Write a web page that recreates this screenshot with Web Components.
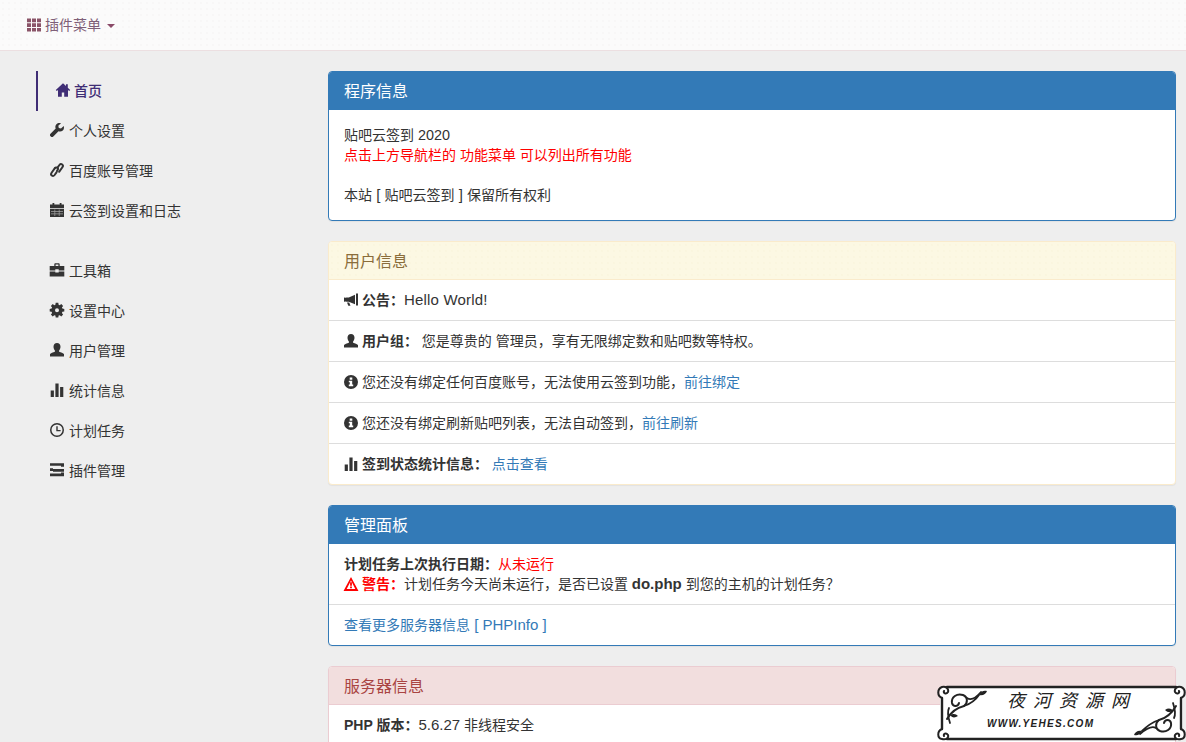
<!DOCTYPE html>
<html lang="zh-CN">
<head>
<meta charset="utf-8">
<title>贴吧云签到</title>
<style>
    html, body { margin: 0; height: 100%; overflow: hidden; }
    body {
        background: #eee;
        color: #333;
        font: 14px/20px "Liberation Sans", "Noto Sans CJK SC", sans-serif;
    }
    .page { display: flex; padding: 20px 10px 0 36px; }
    .red { color: #f00; }
    .en { font-size: 15px; }
    a { color: #337ab7; text-decoration: none; }
</style>
</head>
<body>
<top-bar icon="th" label="插件菜单"></top-bar>

<div class="page">
    <side-nav>
        <side-item icon="home" active>首页</side-item>
        <side-item icon="wrench">个人设置</side-item>
        <side-item icon="link">百度账号管理</side-item>
        <side-item icon="calendar">云签到设置和日志</side-item>
        <side-item icon="briefcase" group>工具箱</side-item>
        <side-item icon="cog">设置中心</side-item>
        <side-item icon="user">用户管理</side-item>
        <side-item icon="stats">统计信息</side-item>
        <side-item icon="time">计划任务</side-item>
        <side-item icon="tasks">插件管理</side-item>
    </side-nav>

    <main-column>
        <info-panel kind="primary" heading="程序信息">
            <panel-row pad="15">
                贴吧云签到<span class="en" style="font-size:14.4px"> 2020</span><br>
                <span class="red">点击上方导航栏的 功能菜单 可以列出所有功能</span><br><br>
                本站<span class="en"> [ </span>贴吧云签到<span class="en"> ] </span>保留所有权利
            </panel-row>
        </info-panel>

        <info-panel kind="warning" heading="用户信息">
            <panel-row><glyph-icon name="bullhorn"></glyph-icon> <b>公告&#xFF1A;</b><span class="en" style="letter-spacing:.2px">Hello World!</span></panel-row>
            <panel-row line><glyph-icon name="user"></glyph-icon> <b>用户组&#xFF1A;</b> 您是尊贵的 管理员&#xFF0C;享有无限绑定数和贴吧数等特权。</panel-row>
            <panel-row line><glyph-icon name="info"></glyph-icon> 您还没有绑定任何百度账号&#xFF0C;无法使用云签到功能&#xFF0C;<a href="#">前往绑定</a></panel-row>
            <panel-row line><glyph-icon name="info"></glyph-icon> 您还没有绑定刷新贴吧列表&#xFF0C;无法自动签到&#xFF0C;<a href="#">前往刷新</a></panel-row>
            <panel-row line><glyph-icon name="stats"></glyph-icon> <b>签到状态统计信息&#xFF1A;</b> <a href="#">点击查看</a></panel-row>
        </info-panel>

        <info-panel kind="primary" heading="管理面板">
            <panel-row>
                <b>计划任务上次执行日期&#xFF1A;</b><span class="red">从未运行</span><br>
                <glyph-icon name="warning" class="red"></glyph-icon> <b class="red">警告&#xFF1A;</b>计划任务今天尚未运行&#xFF0C;是否已设置 <b class="en">do.php</b> 到您的主机的计划任务&#xFF1F;
            </panel-row>
            <panel-row line><a href="#">查看更多服务器信息<span class="en"> [ PHPInfo ]</span></a></panel-row>
        </info-panel>

        <info-panel kind="danger" heading="服务器信息">
            <panel-row><b>PHP 版本&#xFF1A;</b><span class="en">5.6.27</span> 非线程安全</panel-row>
        </info-panel>
    </main-column>
</div>

<water-mark></water-mark>

<script type="text/javascript">
    const GLYPHS = {
        th: '<path d="M0 .5h4v3.7H0zM5 .5h4v3.7H5zM10 .5h4v3.7h-4zM0 5.200h4v3.700H0zM5 5.200h4v3.700H5zM10 5.200h4v3.700h-4zM0 9.900h4v3.700H0zM5 9.900h4v3.700H5zM10 9.900h4v3.700h-4z"/>',
        home: '<path d="M7 .2-.2 7l1 1.100L2 7V13.800h3.800V9.500h2.400v4.300H12V7l1.200 1.100 1-1.100-2.400-2.300V1.200H10v1.900z"/>',
        wrench: '<path d="M13.700 2.900 11 5.500 8.800 5l-.5-2.200L11 .2C9.200-.4 7.500 0 6.400 1.200 5.300 2.400 5.100 4 5.700 5.500L.5 10.700c-.7.700-.7 1.800 0 2.500l.3.300c.7.700 1.800.7 2.500 0l5.200-5.200c1.500.6 3.100.3 4.300-.8 1.100-1.100 1.500-2.900.9-4.600z"/>',
        link: '<g fill="none" stroke="currentColor" stroke-width="2" stroke-linecap="round"><path d="M6.500 9.400 4.600 12c-.8 1-2 1.100-2.800.5S.9 10.700 1.600 9.700L4.900 5.200"/><path d="M7.500 4.600 9.400 2c.8-1 2-1.100 2.800-.5s.9 1.800.2 2.800L9.100 8.800"/><path d="M4.900 5.200c.7-.9 1.800-1 2.500-.4s.7 1.700 0 2.600l-.5.700"/></g>',
        calendar: '<path d="M0 1.500h2.500V0h1.800v1.500h5.400V0h1.800v1.500H14v3.700H0zM0 6h14v8H0z"/><path fill="#fff" opacity=".55" d="M1 8h12v.7H1zM1 10.500h12v.7H1zM4.500 6.500h.7v6.500h-.7zM8.800 6.500h.7v6.500h-.7z"/>',
        briefcase: '<path d="M4.300 3V1.300C4.300.7 4.800.2 5.400.2h3.200c.6 0 1.100.5 1.100 1.100V3H14.300v4.500H8.700V6.300H5.300v1.200H-.3V3zm1.300 0h2.800V1.500H5.600zM-.3 8.500h5.600v1.100h3.400V8.500h5.600V13.500H-.3z"/>',
        cog: '<path d="M5.700-.2h2.600l.3 2 1.100.4 1.600-1.200L13.100 2.900l-1.200 1.600.5 1.100 1.900.3v2.600l-1.900.3-.5 1.100 1.200 1.600-1.800 1.900-1.600-1.200-1.100.4-.3 2H5.700l-.3-2-1.100-.4-1.600 1.200L.9 11.500l1.200-1.600-.5-1.100-1.900-.3V5.900l1.900-.3.5-1.100L.9 2.900 2.700 1l1.600 1.200 1.100-.4zM7 5.200a2 2 0 1 0 0 4 2 2 0 0 0 0-4z"/>',
        user: '<path d="M7 0c2.200 0 3.500 1.600 3.500 3.700 0 1.500-.6 2.900-1.400 3.700v1.300c1.900.6 4.200 1.300 4.900 2.400v2.400H0v-2.400c.7-1.100 3-1.800 4.900-2.400V7.400C4.100 6.600 3.500 5.200 3.500 3.700 3.500 1.600 4.800 0 7 0z"/>',
        stats: '<path d="M.7 7.500h3.200V14H.7zM5.400.5h3.200V14H5.400zM10.100 4h3.200v10h-3.200z"/>',
        time: '<path fill-rule="evenodd" d="M7 0a7 7 0 1 1 0 14A7 7 0 0 1 7 0zm0 1.500a5.500 5.500 0 1 0 0 11 5.500 5.500 0 0 0 0-11z"/><path d="M6.300 3.200h1.400v3.700h2.900v1.400H6.300z"/>',
        tasks: '<path d="M0 .3h14v3.400H11V2.800H0zM0 5.200h3v.9h11v2.600H3v-.8H0zM0 10.500h11v-.9h3v3.600H0z"/>',
        bullhorn: '<path d="M12 .5h2v12h-2zM11 1.800v9.400L4.800 8.800H2.500L1.800 8.500 0 8.800V4.400l1.800.3.700-.3h2.300zM3 9.400h2.200L6.500 12.800H4.300z"/>',
        info: '<path fill-rule="evenodd" d="M7 0a7 7 0 1 1 0 14A7 7 0 0 1 7 0zM5.700 2.500v2.200h2.600V2.500zM4.800 5.800v1.500h1v2.300h-1V11.200h4.400V9.600h-1V5.800z"/>',
        warning: '<path fill-rule="evenodd" d="M7 0 14.500 14H-.5zm0 3.600L2.700 11.900h8.600z"/><path d="M6.100 5.200h1.800v3.600H6.100zm0 4.300h1.800v1.700H6.100z"/>'
    };

    class GlyphIcon extends HTMLElement {
        constructor() {
            super();
            this.attachShadow({mode: 'open'});
            this.shadowRoot.innerHTML = `
                <style>
                    :host { display: inline-block; width: 14px; height: 14px; vertical-align: -2px; }
                    svg { display: block; width: 14px; height: 14px; fill: currentColor; overflow: visible; }
                </style>
                <svg viewBox="0 0 14 14">${GLYPHS[this.getAttribute('name')] || ''}</svg>`;
        }
    }

    class TopBar extends HTMLElement {
        constructor() {
            super();
            this.attachShadow({mode: 'open'});
            this.shadowRoot.innerHTML = `
                <style>
                    :host {
                        display: flex;
                        align-items: center;
                        box-sizing: border-box;
                        height: 51px;
                        padding-left: 27px;
                        color: #7f5f78;
                        border-bottom: 1px solid #ecdfe1;
                        background-color: #fbfbfb;
                        background-image: radial-gradient(#f3f1f1 0.6px, transparent 0.8px);
                        background-size: 6px 6px;
                    }
                    glyph-icon { width: 13px; margin-right: 5px; color: #8a5468; }
                    .caret {
                        width: 0; height: 0; margin-left: 6px; margin-top: 2px;
                        border-top: 4px solid #8a4a68;
                        border-left: 4px solid transparent;
                        border-right: 4px solid transparent;
                    }
                </style>
                <glyph-icon name="${this.getAttribute('icon')}"></glyph-icon>
                <span>${this.getAttribute('label')}</span>
                <span class="caret"></span>`;
        }
    }

    class SideNav extends HTMLElement {
        constructor() {
            super();
            this.attachShadow({mode: 'open'});
            this.shadowRoot.innerHTML = `
                <style>
                    :host { display: flex; flex-direction: column; flex: 0 0 292px; }
                </style>
                <slot></slot>`;
        }
    }

    class SideItem extends HTMLElement {
        constructor() {
            super();
            this.attachShadow({mode: 'open'});
            this.shadowRoot.innerHTML = `
                <style>
                    :host {
                        display: flex;
                        align-items: center;
                        height: 40px;
                        padding-left: 14px;
                        box-sizing: border-box;
                        color: #333;
                    }
                    :host([group]) { margin-top: 20px; }
                    :host([active]) {
                        padding-left: 18px;
                        color: #3f2d75;
                        border-left: 2px solid #3f2d75;
                        font-weight: 500;
                    }
                    glyph-icon { margin-right: 5px; transform: translateY(-1px); }
                    :host([active]) glyph-icon { margin-right: 4px; }
                </style>
                <glyph-icon name="${this.getAttribute('icon')}"></glyph-icon>
                <slot></slot>`;
        }
    }

    class MainColumn extends HTMLElement {
        constructor() {
            super();
            this.attachShadow({mode: 'open'});
            this.shadowRoot.innerHTML = `
                <style>
                    :host { display: flex; flex-direction: column; gap: 20px; flex: 1; min-width: 0; }
                </style>
                <slot></slot>`;
        }
    }

    class InfoPanel extends HTMLElement {
        constructor() {
            super();
            this.attachShadow({mode: 'open'});
            this.shadowRoot.innerHTML = `
                <style>
                    :host {
                        display: block;
                        background: #fff;
                        border: 1px solid var(--edge);
                        border-radius: 4px;
                        box-shadow: 0 1px 1px rgba(0,0,0,.05);
                        overflow: hidden;
                    }
                    :host([kind=primary]) { --edge: #337ab7; --head: #337ab7; --ink: #fff; }
                    :host([kind=warning]) { --edge: #faebcc; --head: #fcf8e3; --ink: #8a6d3b; }
                    :host([kind=danger])  { --edge: #ebccd1; --head: #f2dede; --ink: #a94442; }
                    .head {
                        padding: 11px 15px 9px;
                        height: 17px;
                        font-size: 16px;
                        line-height: 18px;
                        color: var(--ink);
                        background: var(--head);
                        border-bottom: 1px solid var(--edge);
                    }
                    :host([kind=warning]) .head {
                        background-image: radial-gradient(#f8f3d9 0.6px, transparent 0.8px);
                        background-size: 6px 6px;
                    }
                </style>
                <div class="head">${this.getAttribute('heading')}</div>
                <slot></slot>`;
        }
    }

    class PanelRow extends HTMLElement {
        constructor() {
            super();
            this.attachShadow({mode: 'open'});
            const pad = this.getAttribute('pad') || 10;
            this.shadowRoot.innerHTML = `
                <style>
                    :host { display: block; padding: ${pad}px 15px; }
                    :host([line]) { border-top: 1px solid #ddd; }
                </style>
                <slot></slot>`;
        }
    }

    class WaterMark extends HTMLElement {
        constructor() {
            super();
            this.attachShadow({mode: 'open'});
            this.shadowRoot.innerHTML = `
                <style>
                    :host { position: absolute; left: 937px; top: 685px; width: 249px; height: 57px; display: block; }
                    svg { display: block; }
                    text { fill: #222; }
                    .name { font: 400 18px "Noto Sans CJK SC", sans-serif; letter-spacing: 8px; font-style: italic; }
                    .url { font: italic 700 10px "Liberation Sans", sans-serif; letter-spacing: 1.300px; }
                    .o { fill: none; stroke: #222; stroke-linecap: round; }
                    .leaf { fill: #222; }
                </style>
                <svg width="249" height="57" viewBox="0 0 249 57">
                    <rect x="3" y="2" width="243" height="52" fill="#fff"/>
                    <path class="o" stroke-width="2.400" d="M10 2H239M10 54H239M5 13V44M244 13V44"/>
                    <path class="o" stroke-width="2" d="M5 13C0 11 0 4 5 2 9 1 12 4 11 7 9 10 6 8 7 6M244 13C249 11 249 4 244 2 240 1 237 4 238 7 240 10 243 8 242 6M5 44C0 46 0 53 5 54 9 55 12 53 11 50 9 47 6 49 7 51M244 44C249 46 249 53 244 54 240 55 237 53 238 50 240 47 243 49 242 51"/>
                    <!-- curls, top left and bottom right -->
                    <path class="o" stroke-width="2" d="M10 34C14 27 19 23 27 21 31 18 31 12 26 10 20 8 14 12 15 18 16 22 21 22 22 18"/>
                    <path class="o" stroke-width="1.800" d="M27 21C33 19 38 16 42 10M30 13C33 15 38 14 44 7M12 23C10 27 11 32 13 38"/>
                    <path class="leaf" d="M42 10C44 6 47 5 50 6 49 9 46 11 42 10zM13 30C17 28 19 29 21 31 18 33 15 33 13 30z"/>
                    <path class="o" stroke-width="2" d="M239 21C235 28 230 33 222 35 218 38 218 44 223 46 229 48 235 44 234 38 233 34 228 34 227 38"/>
                    <path class="o" stroke-width="1.800" d="M222 35C216 37 210 41 205 46M219 43C216 41 211 42 203 49M237 33C239 29 238 24 236 18"/>
                    <path class="leaf" d="M205 46C203 50 200 51 197 50 198 47 201 45 205 46zM236 26C232 28 230 27 228 25 231 23 234 23 236 26z"/>
                    <text class="name" x="70" y="22">夜河资源网</text>
                    <text class="url" x="50" y="42">WWW.YEHES.COM</text>
                </svg>`;
        }
    }

    window.customElements.define("glyph-icon", GlyphIcon);
    window.customElements.define("top-bar", TopBar);
    window.customElements.define("side-nav", SideNav);
    window.customElements.define("side-item", SideItem);
    window.customElements.define("main-column", MainColumn);
    window.customElements.define("info-panel", InfoPanel);
    window.customElements.define("panel-row", PanelRow);
    window.customElements.define("water-mark", WaterMark);
</script>
</body>
</html>
